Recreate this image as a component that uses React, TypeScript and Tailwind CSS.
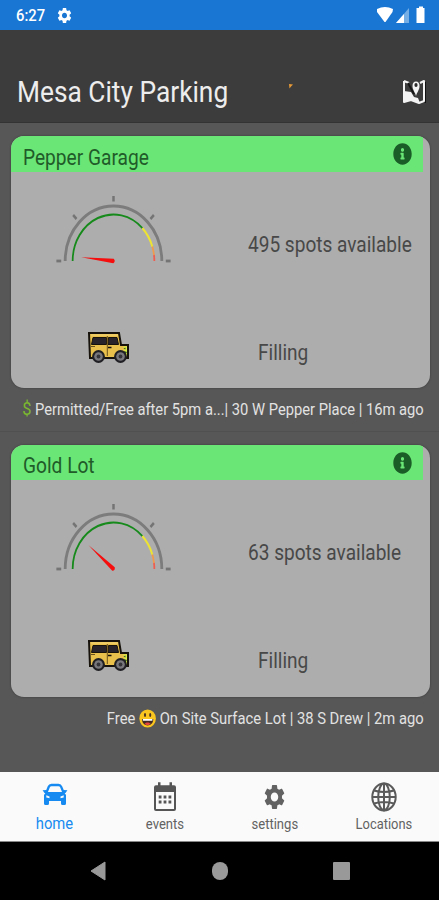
import React from "react"
import { FaInfoCircle } from "react-icons/fa"
import { MdSettings } from "react-icons/md"

interface Lot {
  name: string
  spots: number
  status: string
  needle: number
  notes: React.ReactNode
}

function Smiley() {
  return (
    <svg viewBox="0 0 20 20" preserveAspectRatio="none" className="mx-1 inline-block h-[19px] w-5 align-[-4px]">
      <circle cx="10" cy="10" r="9.5" fill="#fbc51f" />
      <ellipse cx="7" cy="6.3" rx="1.2" ry="2.2" fill="#4a3120" />
      <ellipse cx="13" cy="6.3" rx="1.2" ry="2.2" fill="#4a3120" />
      <path d="M3.5 10.5h13c0 9-13 9-13 0z" fill="#402a22" />
      <path d="M4.5 10.5h11v1.8h-11z" fill="#fff" />
      <path d="M6.5 15.6c2-2 5-2 7 0-2 2-5 2-7 0z" fill="#e8453c" />
    </svg>
  )
}

const lots: Lot[] = [
  {
    name: "Pepper Garage",
    spots: 495,
    status: "Filling",
    needle: 6,
    notes: (
      <span className="inline-block origin-right scale-x-[0.866] text-[17px]">
        <span className="text-[19px] leading-none text-[#7cb82f]">$</span> Permitted/Free after 5pm a...| 30 W Pepper Place | 16m ago
      </span>
    ),
  },
  {
    name: "Gold Lot",
    spots: 63,
    status: "Filling",
    needle: 40,
    notes: (
      <span className="inline-block origin-right scale-x-[0.869] text-[17px]">
        Free
        <Smiley />
        On Site Surface Lot | 38 S Drew | 2m ago
      </span>
    ),
  },
]

function Gauge({ angle }: { angle: number }) {
  return (
    <svg viewBox="-70 -70 140 80" preserveAspectRatio="none" className="h-20 w-[123px]" fill="none">
      <path d="M-55 0A55 55 0 0 1 55 0" stroke="#7c7c7c" strokeWidth="3.2" />
      <path d="M-46.5 0A46.5 46.5 0 0 1 32.9 -32.9" stroke="#178a1c" strokeWidth="2" />
      <path d="M32.9 -32.9A46.5 46.5 0 0 1 44.2 -14.4" stroke="#ece332" strokeWidth="2.2" />
      <path d="M44.2 -14.4A46.5 46.5 0 0 1 46.1 -6" stroke="#f09a4c" strokeWidth="2" />
      <path d="M46.1 -6A46.5 46.5 0 0 1 46.5 0" stroke="#ef5d50" strokeWidth="2" />
      {[0, 45, 90, 135, 180].map((a) => (
        <path key={a} d="M-65 0H-59.5" stroke="#747474" strokeWidth="2.8" transform={`rotate(${a})`} />
      ))}
      <path d="M-37 0L0 -2.2Q2.8 0 0 2.2z" fill="#f60d0d" transform={`rotate(${angle})`} />
    </svg>
  )
}

function Jeep() {
  return (
    <svg viewBox="0 0 42 32" className="h-8 w-[42px]">
      <path d="M1 1H31L33 13H40V26H2Z" fill="#e9c04c" stroke="#17130c" strokeWidth="2" />
      <path d="M3 3h27" stroke="#f3d77a" strokeWidth="1" />
      <path d="M5 5.500H18.500V12.500H3.500z M20.500 5.500H29L30.500 12.500H20z" fill="#28232a" stroke="#17130c" strokeWidth="1" />
      <path d="M19.3 4V24M3 14.5H7" stroke="#6b501c" strokeWidth="1" />
      <path d="M20 15.500h3.500" stroke="#17130c" strokeWidth="1.600" />
      <path d="M35 14.500h4v9.500h-2l-2-4 2-2z" fill="#d9ed45" />
      <path d="M35.5 16.500l2-1v2zM36 19l3 1-2 3z" fill="#315a1c" />
      <circle cx="10.5" cy="24.500" r="6.400" fill="#202024" />
      <circle cx="10.5" cy="24.500" r="4.300" fill="#77777c" />
      <circle cx="10.5" cy="24.500" r="1.900" fill="#34343a" />
      <circle cx="32.500" cy="24.500" r="6.400" fill="#202024" />
      <circle cx="32.500" cy="24.500" r="4.300" fill="#77777c" />
      <circle cx="32.500" cy="24.500" r="1.900" fill="#34343a" />
    </svg>
  )
}

function MapIcon() {
  return (
    <svg viewBox="0 0 24 26" className="h-[26px] w-6" fill="none">
      <path d="M23.4 3v21" stroke="#111" strokeWidth="1.2" />
      <path d="M2 2L7 4M18 4l4-2v20l-5 2-8-3-7 2V2" stroke="#f4f4f4" strokeWidth="2" strokeLinejoin="round" />
      <path d="M2 12l7 1 3 5 4 1 2 5-9-3-7 2z" fill="#f4f4f4" />
      <path d="M6 4l6 11" stroke="#151515" strokeWidth="1.8" />
      <path d="M14 17c-1-4-3.5-6-3.5-10a3.5 4.5 0 0 1 7 0c0 4-2.500 6-3.500 10z" fill="#f4f4f4" />
      <ellipse cx="14" cy="6" rx="1.6" ry="1.9" fill="#2a2a2a" />
    </svg>
  )
}

function CarIcon() {
  return (
    <svg viewBox="0 0 26 24" className="h-6 w-[26px]" fill="#168af0">
      <path d="M4.500 9.500L6.800 3.800Q7.500 2 9.500 2h7q2 0 2.700 1.800L21.500 9.500" fill="none" stroke="#168af0" strokeWidth="2.300" />
      <path d="M.6 7.200L4.500 7l1 3H2.500zM25.400 7.200L21.500 7l-1 3h3z" />
      <path
        fillRule="evenodd"
        d="M4 9h18l2 3v8.500q0 1.500-1.500 1.500h-2q-1.500 0-1.500-1.500V18H7v2.500Q7 22 5.500 22h-2Q2 22 2 20.500V12zM4.300 12.200v2.300l3.200.8v-1.800zM21.700 12.200v2.300l-3.200.8v-1.800z"
      />
    </svg>
  )
}

function CalendarIcon() {
  return (
    <svg viewBox="0 0 24 30" className="h-[30px] w-6" fill="#555">
      <path fillRule="evenodd" d="M5 .3h2.500v3h9v-3H19v3h2q2 0 2 2V27q0 2-2 2H3q-2 0-2-2V5.300q0-2 2-2h2zM3 10V27H21V10z" />
      <path d="M5.700 13.500h2.800v3H5.700zM10.600 13.500h2.800v3h-2.800zM15.500 13.500h2.800v3h-2.800zM5.700 18.500h2.800v3H5.700zM10.600 18.500h2.800v3h-2.800zM15.500 18.500h2.800v3h-2.800z" />
    </svg>
  )
}

function GlobeIcon() {
  return (
    <svg viewBox="0 0 26 30" className="h-[30px] w-[26px]" fill="none" stroke="#5a5a5a" strokeWidth="2">
      <ellipse cx="13" cy="15" rx="11.700" ry="13.400" />
      <ellipse cx="13" cy="15" rx="5.800" ry="13.400" />
      <path d="M13 1.500v27M1.300 15h23.400M3 8.500q10 3 20 0M3 21.500q10-3 20 0" />
    </svg>
  )
}

function LotCard({ lot }: { lot: Lot }) {
  return (
    <section className="group h-[309px] shrink-0 border-b border-[#505050] pt-[13px] pr-[9px] pl-[11px] last:border-b-0">
      <div className="h-[252px] overflow-hidden rounded-[13px] bg-[#adadad] shadow-[0_0_2px_#333]">
        <header className="mr-[7px] flex h-9 items-center justify-between bg-[#6ae676] pr-[11px] pl-[11.5px] group-last:h-[35px]">
          <h2 className="origin-left scale-x-[0.87] pt-[6px] text-[22px] whitespace-nowrap text-[#215b29]">{lot.name}</h2>
          <FaInfoCircle preserveAspectRatio="none" className="h-[22px] w-[19px] text-[#1b5d27]" />
        </header>
        <div className="grid h-[145px] grid-cols-[237px_1fr] items-center">
          <div className="-mt-[27px] pl-[41px]">
            <Gauge angle={lot.needle} />
          </div>
          <p className="origin-left scale-x-[0.866] text-[22px] whitespace-nowrap text-[#484848]">{lot.spots} spots available</p>
        </div>
        <div className="grid h-[71px] grid-cols-[247px_1fr] items-center">
          <div className="-mt-[10px] pl-[77px]">
            <Jeep />
          </div>
          <p className="origin-left scale-x-[0.866] text-[22px] whitespace-nowrap text-[#484848]">{lot.status}</p>
        </div>
      </div>
      <div className="flex h-[43px] items-center justify-end pr-[6px] whitespace-nowrap text-[#e2e2e2]">{lot.notes}</div>
    </section>
  )
}

export default function App() {
  return (
    <div className="flex h-[900px] w-[439px] flex-col overflow-hidden bg-[#575757] font-['Roboto',sans-serif]">
      <div className="flex h-[30px] shrink-0 items-center bg-[#1976d2] pr-[13px] pl-[16px] text-white">
        <span className="w-[40px] origin-left scale-x-[0.87] pt-px text-[17px] font-medium">6:27</span>
        <MdSettings preserveAspectRatio="none" className="h-[19px] w-[17px]" />
        <svg viewBox="0 0 50 20" className="ml-auto h-5 w-[50px]" fill="#fff">
          <path d="M1 4q8-4 16 0l-.5 3L9.500 17h-1L1 7z" />
          <path d="M33 3v15H20z" fill="#75ade5" />
          <path d="M28 9v9h-8z" />
          <path d="M43 3V1.500h4V3h1.500v15h-8V3z" />
        </svg>
      </div>
      <div className="flex h-[93px] shrink-0 items-end border-b border-[#333] bg-[#3c3c3c] pr-[13px] pb-[8px] pl-[17px]">
        <h1 className="w-[271px] origin-left scale-x-[0.877] text-[30px] leading-[44px] whitespace-nowrap text-[#ededed]">Mesa City Parking</h1>
        <svg viewBox="0 0 6 6" className="mb-[25px] size-[6px]">
          <path d="M1 1l4 .5-2 2-1.500 2z" fill="#e99b36" />
        </svg>
        <div className="mb-[9px] ml-auto">
          <MapIcon />
        </div>
      </div>
      <main className="flex h-[649px] shrink-0 flex-col overflow-hidden">
        {lots.map((lot) => (
          <LotCard key={lot.name} lot={lot} />
        ))}
      </main>
      <nav className="grid h-[70px] shrink-0 grid-cols-4 border-b border-[#888] bg-[#fafafa] text-[15px] text-[#626262]">
        <div className="flex flex-col items-center text-[#168af0]">
          <div className="flex h-[42px] items-center pt-[4px]">
            <CarIcon />
          </div>
          <span className="scale-x-[0.87] text-[17px] leading-[18px]">home</span>
        </div>
        <div className="flex flex-col items-center">
          <div className="flex h-[43px] items-center pt-[6px]">
            <CalendarIcon />
          </div>
          <span className="scale-x-[0.87] leading-[18px]">events</span>
        </div>
        <div className="flex flex-col items-center">
          <div className="flex h-[43px] items-center pt-[6px]">
            <MdSettings preserveAspectRatio="none" className="h-[30px] w-[25px]" />
          </div>
          <span className="scale-x-[0.87] leading-[18px]">settings</span>
        </div>
        <div className="flex flex-col items-center">
          <div className="flex h-[43px] items-center pt-[6px]">
            <GlobeIcon />
          </div>
          <span className="scale-x-[0.86] leading-[18px]">Locations</span>
        </div>
      </nav>
      <div className="flex h-[58px] shrink-0 items-center justify-between bg-black pr-[89px] pl-[90px]">
        <svg viewBox="0 0 16 20" className="h-5 w-4">
          <path d="M15 1v18L1 10z" fill="#999" stroke="#999" strokeLinejoin="round" />
        </svg>
        <div className="h-[18px] w-4 rounded-full bg-[#999]" />
        <div className="h-[18px] w-[17px] rounded-[1px] bg-[#999]" />
      </div>
    </div>
  )
}
